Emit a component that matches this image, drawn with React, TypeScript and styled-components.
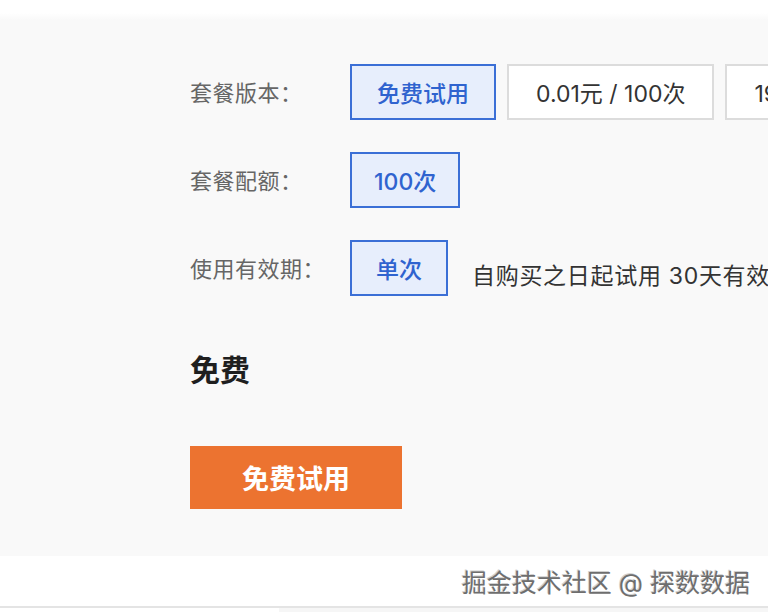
import React from "react";
import styled, { createGlobalStyle } from "styled-components";

const Global = createGlobalStyle`
  html, body {
    margin: 0;
    padding: 0;
    background: #fff;
    overflow: hidden;
  }
  body {
    font-family: "Inter", "Noto Sans CJK SC", "Noto Sans", sans-serif;
  }
`;

interface iOption {
  label: string;
  active?: boolean;
}

const App: React.FC = () => {
  const versions: iOption[] = [
    { label: "免费试用", active: true },
    { label: "0.01元 / 100次" },
    { label: "19.9元 / 1000次" },
  ];

  return (
    <Page>
      <Global />
      <Panel>
        <Row>
          <Label>套餐版本：</Label>
          <Options>
            {versions.map((v) => (
              <Option key={v.label} active={v.active}>
                {v.label}
              </Option>
            ))}
          </Options>
        </Row>
        <Row>
          <Label>套餐配额：</Label>
          <Options>
            <Option active pad="22px">100次</Option>
          </Options>
        </Row>
        <Row>
          <Label>使用有效期：</Label>
          <Options>
            <Option active pad="24px">单次</Option>
            <Note>自购买之日起试用 30天有效</Note>
          </Options>
        </Row>
        <Price>免费</Price>
        <BuyButton>免费试用</BuyButton>
      </Panel>
      <Footer>
        <Watermark>掘金技术社区 @ 探数数据</Watermark>
      </Footer>
      <Bottom>
        <BottomTab />
      </Bottom>
    </Page>
  );
};

export default App;

const Page = styled.div`
  width: 768px;
  height: 612px;
  overflow: hidden;
  padding-top: 13px;
  box-sizing: border-box;
`;

const Panel = styled.div`
  background: linear-gradient(#ffffff 0, #f9f9f9 7px);
  padding: 51px 0 0 190px;
  overflow: hidden;
  height: 543px;
  box-sizing: border-box;
`;

const Row = styled.div`
  display: flex;
  align-items: center;
  height: 56px;
  margin-bottom: 32px;
`;

const Label = styled.div`
  width: 160px;
  flex-shrink: 0;
  font-size: 22px;
  color: #666;
  margin-top: -3px;
  letter-spacing: 0.5px;
`;

const Options = styled.div`
  display: flex;
  align-items: center;
  gap: 11px;
  flex-wrap: nowrap;
`;

const Option = styled.div<{ active?: boolean; pad?: string }>`
  height: 56px;
  box-sizing: border-box;
  display: flex;
  align-items: center;
  justify-content: center;
  padding: 0 ${({ pad, active }) => pad || (active ? "25px" : "27px")};
  font-size: 23px;
  white-space: nowrap;
  flex-shrink: 0;
  border: 2px solid ${({ active }) => (active ? "#3b6fd6" : "#dcdcdc")};
  background: ${({ active }) => (active ? "#e7eefc" : "#ffffff")};
  color: ${({ active }) => (active ? "#2f63cf" : "#333")};
  font-weight: ${({ active }) => (active ? 500 : 400)};
`;

const Note = styled.div`
  font-size: 23px;
  color: #333;
  white-space: nowrap;
  margin-left: 13px;
  margin-top: 12px;
  letter-spacing: 0.7px;
`;

const Price = styled.div`
  font-size: 30px;
  font-weight: 700;
  color: #1f1f1f;
  margin-top: 53px;
  line-height: 42px;
`;

const BuyButton = styled.button`
  display: block;
  margin-top: 55px;
  width: 212px;
  height: 63px;
  border: none;
  background: #ec7330;
  color: #fff;
  font-family: inherit;
  font-size: 27px;
  font-weight: 700;
  cursor: pointer;
`;

const Footer = styled.div`
  height: 50px;
  display: flex;
  justify-content: flex-end;
  align-items: center;
  padding-right: 18px;
`;

const Watermark = styled.div`
  font-size: 25px;
  color: #6e6e6e;
  text-shadow: 1px 1px 0 #ffffff, -1px -1px 0 #d0d0d0;
  letter-spacing: 0px;
`;

const Bottom = styled.div`
  border-top: 2px solid #e4e4e4;
  height: 10px;
  display: flex;
  justify-content: flex-end;
`;

const BottomTab = styled.div`
  width: 489px;
  background: #f6f6f6;
`;
